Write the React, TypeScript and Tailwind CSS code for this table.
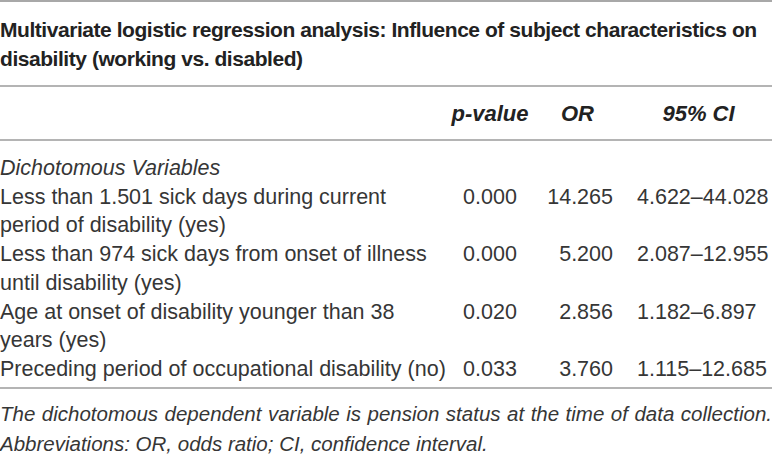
const rows = [
  {
    label: ['Less than 1.501 sick days during current', 'period of disability (yes)'],
    p: '0.000',
    or: '14.265',
    ci: '4.622–44.028',
  },
  {
    label: ['Less than 974 sick days from onset of illness', 'until disability (yes)'],
    p: '0.000',
    or: '5.200',
    ci: '2.087–12.955',
  },
  {
    label: ['Age at onset of disability younger than 38', 'years (yes)'],
    p: '0.020',
    or: '2.856',
    ci: '1.182–6.897',
  },
  {
    label: ['Preceding period of occupational disability (no)'],
    p: '0.033',
    or: '3.760',
    ci: '1.115–12.685',
  },
];

const App = () => {
  return (
    <div className="w-[772px] h-[465px] bg-white text-[#363636] font-['Liberation_Sans',Arial,sans-serif] overflow-hidden">
      <div className="h-[2px] bg-[#a8a8a8]" />

      {/* Title */}
      <div className="pt-[13px] pb-[12px] text-[21px] leading-[29px] font-bold text-[#222] tracking-[-0.45px]">
        <div className="whitespace-nowrap">
          Multivariate logistic regression analysis: Influence of subject characteristics on
        </div>
        <div className="whitespace-nowrap">disability (working vs. disabled)</div>
      </div>

      <div className="h-[2px] bg-[#b4b4b4]" />

      {/* Header row */}
      <div className="grid grid-cols-[450px_80px_95px_1fr] h-[52px] items-center text-[22px] italic font-bold text-[#222]">
        <div />
        <div className="text-center">p-value</div>
        <div className="text-center">OR</div>
        <div className="text-center">95% CI</div>
      </div>

      <div className="h-[2px] bg-[#b4b4b4]" />

      {/* Body */}
      <div className="pt-[13px] pb-[3px] text-[21.5px] leading-[28.7px]">
        <div className="italic">Dichotomous Variables</div>
        {rows.map((r) => (
          <div key={r.p + r.ci} className="grid grid-cols-[450px_80px_95px_1fr] items-start">
            <div className="whitespace-nowrap">
              {r.label.map((line) => (
                <div key={line}>{line}</div>
              ))}
            </div>
            <div className="text-center">{r.p}</div>
            <div className="text-right pr-[12px]">{r.or}</div>
            <div className="pl-[12px] whitespace-nowrap">{r.ci}</div>
          </div>
        ))}
      </div>

      <div className="h-[2px] bg-[#b4b4b4]" />

      {/* Footnote */}
      <div className="pt-[10px] text-[20.5px] leading-[30px] italic">
        <div className="whitespace-nowrap text-justify [text-align-last:justify]">
          The dichotomous dependent variable is pension status at the time of data collection.
        </div>
        <div>Abbreviations: OR, odds ratio; CI, confidence interval.</div>
      </div>
    </div>
  );
};

export default App;
